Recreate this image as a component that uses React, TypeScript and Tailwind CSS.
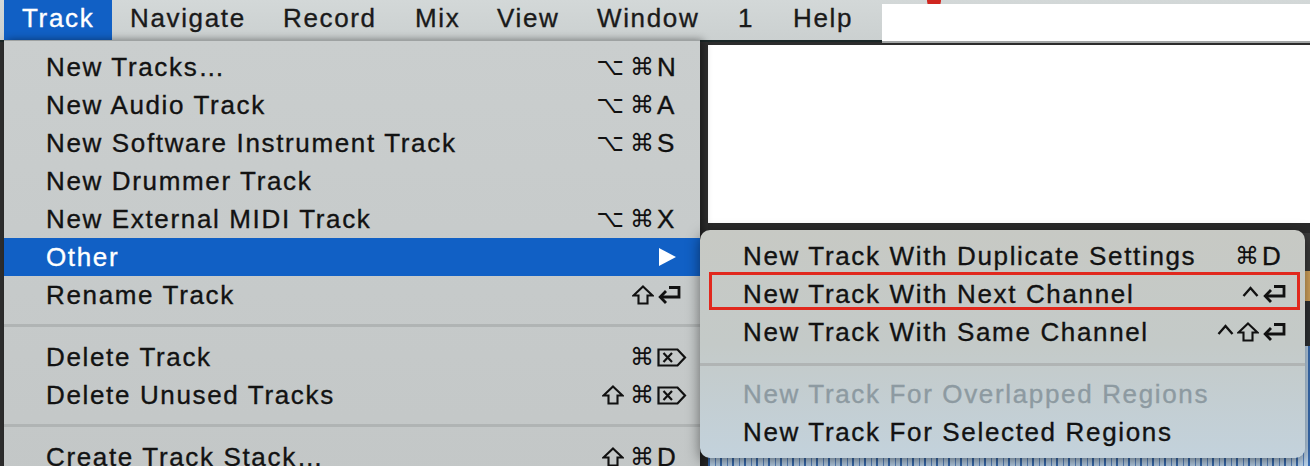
import React from "react";

const SANS = "[font-family:'Liberation_Sans',Arial,sans-serif]";

const Ret = ({ color = "#111" }: { color?: string }) => (
  <svg width="25" height="19" viewBox="0 0 25 19" fill="none" stroke={color} strokeWidth="2.8" strokeLinejoin="miter" strokeLinecap="butt">
    <path d="M12 1.5 H22 V11 H3.5" />
    <path d="M9 5 L3.2 11 L9 17" />
  </svg>
);

const Ctrl = () => (
  <svg width="17" height="18" viewBox="0 0 17 18" fill="none" stroke="#111" strokeWidth="2.4">
    <path d="M1.5 11 L8.5 3 L15.5 11" />
  </svg>
);

const Shift = () => (
  <svg width="22" height="20" viewBox="0 0 22 20" fill="none" stroke="#111" strokeWidth="2.1" strokeLinejoin="miter">
    <path d="M11 1.5 L20.5 10.5 H15.5 V18.5 H6.5 V10.5 H1.5 Z" />
  </svg>
);

const Del = () => (
  <svg width="30" height="19" viewBox="0 0 30 19" fill="none" stroke="#111" strokeWidth="2.2" strokeLinejoin="miter">
    <path d="M1.5 1.5 H20.5 L28 9.5 L20.5 17.5 H1.5 Z" />
    <path d="M6.5 5 L15 14 M15 5 L6.5 14" />
  </svg>
);

const Sym = ({ children }: { children: React.ReactNode }) => (
  <span className="[font-family:'DejaVu_Sans',sans-serif] text-[24px] leading-none">{children}</span>
);

const Mods = ({ children }: { children: React.ReactNode }) => (
  <span className="flex items-center gap-[6px]">{children}</span>
);

type Item =
  | { sep: true }
  | {
      sep?: false;
      label: string;
      mods?: React.ReactNode;
      k?: React.ReactNode;
      active?: boolean;
      arrow?: boolean;
      disabled?: boolean;
    };

const OptCmd = (
  <Mods>
    <Sym>⌥</Sym>
    <Sym>⌘</Sym>
  </Mods>
);

const ShiftCmd = (
  <Mods>
    <Shift />
    <Sym>⌘</Sym>
  </Mods>
);

const mainItems: Item[] = [
  { label: "New Tracks…", mods: OptCmd, k: "N" },
  { label: "New Audio Track", mods: OptCmd, k: "A" },
  { label: "New Software Instrument Track", mods: OptCmd, k: "S" },
  { label: "New Drummer Track" },
  { label: "New External MIDI Track", mods: OptCmd, k: "X" },
  { label: "Other", active: true, arrow: true },
  { label: "Rename Track", mods: <Shift />, k: <Ret /> },
  { sep: true },
  { label: "Delete Track", mods: <Sym>⌘</Sym>, k: <Del /> },
  { label: "Delete Unused Tracks", mods: ShiftCmd, k: <Del /> },
  { sep: true },
  { label: "Create Track Stack…", mods: ShiftCmd, k: "D" },
];

const subItems: Item[] = [
  { label: "New Track With Duplicate Settings", mods: <Sym>⌘</Sym>, k: "D" },
  { label: "New Track With Next Channel", mods: <Ctrl />, k: <Ret /> },
  {
    label: "New Track With Same Channel",
    mods: (
      <span className="flex items-center gap-[3px]">
        <Ctrl />
        <Shift />
      </span>
    ),
    k: <Ret />,
  },
  { sep: true },
  { label: "New Track For Overlapped Regions", disabled: true },
  { label: "New Track For Selected Regions" },
];

function Row({ item, sub }: { item: Item; sub?: boolean }) {
  if (item.sep) {
    return (
      <div className="h-[24px] flex flex-col">
        <div className={`${sub ? "mt-[12px]" : "mt-[10px]"} h-[3px] bg-[#b0b4b4]`} />
      </div>
    );
  }
  const color = item.active ? "text-white" : item.disabled ? "text-[#8d9aa1]" : "text-[#121212]";
  return (
    <div
      className={`h-[38px] flex items-center ${sub ? "pl-[43px]" : "pl-[42px]"} ${
        item.active ? "bg-[#1160c5]" : ""
      } ${color}`}
    >
      <span className="flex-1 text-[26px] leading-[38px] tracking-[1.65px] whitespace-nowrap [-webkit-text-stroke-width:0.35px]">
        {item.label}
      </span>
      <span className="flex items-center justify-end text-[#111]">{item.mods}</span>
      <span className="w-[43px] ml-[3px] flex items-center text-[26px] leading-[38px] text-[#111] [-webkit-text-stroke-width:0.35px]">
        {item.arrow ? (
          <svg width="17" height="18" viewBox="0 0 17 18" className="ml-[2px]">
            <path d="M0 0 L17 9 L0 18 Z" fill="#fff" />
          </svg>
        ) : (
          item.k
        )}
      </span>
    </div>
  );
}

const menuBar = [
  { t: "Track", w: "w-[108px]", active: true },
  { t: "Navigate", w: "w-[153px]" },
  { t: "Record", w: "w-[132px]" },
  { t: "Mix", w: "w-[82px]" },
  { t: "View", w: "w-[100px]" },
  { t: "Window", w: "w-[141px]" },
  { t: "1", w: "w-[55px]" },
  { t: "Help", w: "w-[90px]" },
];

export default function App() {
  return (
    <div className={`relative w-[1310px] h-[466px] overflow-hidden bg-[#2c2c2c] ${SANS}`}>
      {/* Menu bar */}
      <div className="h-[42px] flex items-start bg-gradient-to-b from-[#d3d8d8] to-[#cbd0d0] border-b-[2px] border-[#1c2828]">
        <div className="w-[4px]" />
        {menuBar.map((m) => (
          <div
            key={m.t}
            className={`${m.w} h-[40px] pl-[18px] text-[26px] leading-[36px] tracking-[1.65px] whitespace-nowrap [-webkit-text-stroke-width:0.35px] ${
              m.active ? "bg-[#1160c5] text-white" : "text-[#1a1a1a]"
            }`}
          >
            {m.t}
          </div>
        ))}
        <div className="ml-[62px] mt-[-6px] w-[14px] h-[14px] rounded-full bg-[#d0261f]" />
      </div>

      {/* Workspace below */}
      <div className="flex h-[424px]">
        <div className="w-[708px] bg-[#2e2e2e]" />
        <div className="flex-1 flex flex-col">
          <div className="mt-[3px] h-[178px] bg-white" />
          <div className="h-[10px] bg-[#2a2a2a]" />
          <div className="h-[38px] bg-[#3a3a3a]" />
          <div className="h-[30px] bg-[#d7a75e]" />
          <div className="h-[45px] bg-[#2e3134]" />
          <div className="flex-1 bg-[#b9d2ea] bg-[repeating-linear-gradient(90deg,#3a6fb5_0px,#3a6fb5_2px,#bcd5ec_2px,#bcd5ec_7px,#5a88c6_7px,#5a88c6_8px,#bcd5ec_8px,#bcd5ec_12px)]" />
        </div>
      </div>

      {/* Redaction box on status area */}
      <div className="absolute left-[882px] top-[4px] w-[428px] h-[39px] bg-white border-b-[2px] border-[#a3a6a6]" />

      {/* Track menu dropdown */}
      <div className="absolute left-[4px] top-[40px] w-[696px] h-[440px] pt-[7px] border-t border-[#9ea2a2] bg-gradient-to-b from-[#cacece] to-[#c3c7c7] shadow-[3px_0_8px_rgba(0,0,0,0.45)]">
        {mainItems.map((it, i) => (
          <Row key={i} item={it} />
        ))}
      </div>

      {/* Submenu */}
      <div className="absolute left-[700px] top-[230px] w-[605px] h-[228px] pt-[7px] rounded-[10px] overflow-hidden bg-gradient-to-b from-[#c7c9c4] via-[#c4cac8] to-[#c3d2dc] shadow-[0_4px_14px_rgba(0,0,0,0.5)]">
        {subItems.map((it, i) => (
          <Row key={i} item={it} sub />
        ))}
        <div className="absolute left-[9px] top-[42px] w-[591px] h-[38px] border-[3px] border-[#e1281d]" />
      </div>
    </div>
  );
}
